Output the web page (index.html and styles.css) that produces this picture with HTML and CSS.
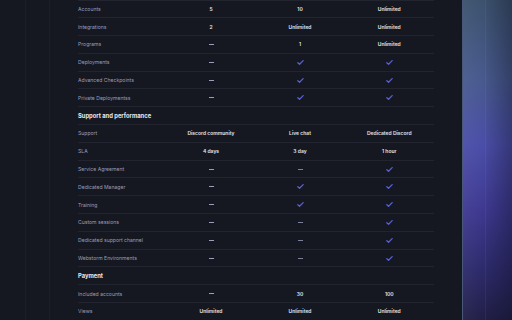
FILE: index.html
```html
<!DOCTYPE html>
<html>
<head>
<meta charset="utf-8">
<link rel="stylesheet" href="styles.css">
</head>
<body>
<div class="page">
  <div class="gutter"><div class="g1"></div><div class="g2"></div></div>
  <div class="table">
    <div class="row"><div class="label">Accounts</div><div class="val">5</div><div class="val">10</div><div class="val">Unlimited</div></div>
    <div class="row"><div class="label">Integrations</div><div class="val">2</div><div class="val">Unlimited</div><div class="val">Unlimited</div></div>
    <div class="row"><div class="label">Programs</div><div class="val"><span class="dash"></span></div><div class="val">1</div><div class="val">Unlimited</div></div>
    <div class="row"><div class="label">Deployments</div><div class="val"><span class="dash"></span></div><div class="val"><svg class="check" viewBox="0 0 8 6"><path d="M0.8 3.2L2.9 5.1L7.2 0.8"/></svg></div><div class="val"><svg class="check" viewBox="0 0 8 6"><path d="M0.8 3.2L2.9 5.1L7.2 0.8"/></svg></div></div>
    <div class="row"><div class="label">Advanced Checkpoints</div><div class="val"><span class="dash"></span></div><div class="val"><svg class="check" viewBox="0 0 8 6"><path d="M0.8 3.2L2.9 5.1L7.2 0.8"/></svg></div><div class="val"><svg class="check" viewBox="0 0 8 6"><path d="M0.8 3.2L2.9 5.1L7.2 0.8"/></svg></div></div>
    <div class="row"><div class="label">Private Deploymentss</div><div class="val"><span class="dash"></span></div><div class="val"><svg class="check" viewBox="0 0 8 6"><path d="M0.8 3.2L2.9 5.1L7.2 0.8"/></svg></div><div class="val"><svg class="check" viewBox="0 0 8 6"><path d="M0.8 3.2L2.9 5.1L7.2 0.8"/></svg></div></div>
    <div class="row section"><div class="heading">Support and performance</div></div>
    <div class="row"><div class="label">Support</div><div class="val">Discord community</div><div class="val">Live chat</div><div class="val">Dedicated Discord</div></div>
    <div class="row"><div class="label">SLA</div><div class="val">4 days</div><div class="val">3 day</div><div class="val">1 hour</div></div>
    <div class="row"><div class="label">Service Agreement</div><div class="val"><span class="dash"></span></div><div class="val"><span class="dash dim"></span></div><div class="val"><svg class="check" viewBox="0 0 8 6"><path d="M0.8 3.2L2.9 5.1L7.2 0.8"/></svg></div></div>
    <div class="row"><div class="label">Dedicated Manager</div><div class="val"><span class="dash"></span></div><div class="val"><svg class="check" viewBox="0 0 8 6"><path d="M0.8 3.2L2.9 5.1L7.2 0.8"/></svg></div><div class="val"><svg class="check" viewBox="0 0 8 6"><path d="M0.8 3.2L2.9 5.1L7.2 0.8"/></svg></div></div>
    <div class="row"><div class="label">Training</div><div class="val"><span class="dash"></span></div><div class="val"><svg class="check" viewBox="0 0 8 6"><path d="M0.8 3.2L2.9 5.1L7.2 0.8"/></svg></div><div class="val"><svg class="check" viewBox="0 0 8 6"><path d="M0.8 3.2L2.9 5.1L7.2 0.8"/></svg></div></div>
    <div class="row"><div class="label">Custom sessions</div><div class="val"><span class="dash"></span></div><div class="val"><span class="dash dim"></span></div><div class="val"><svg class="check" viewBox="0 0 8 6"><path d="M0.8 3.2L2.9 5.1L7.2 0.8"/></svg></div></div>
    <div class="row"><div class="label">Dedicated support channel</div><div class="val"><span class="dash"></span></div><div class="val"><span class="dash dim"></span></div><div class="val"><svg class="check" viewBox="0 0 8 6"><path d="M0.8 3.2L2.9 5.1L7.2 0.8"/></svg></div></div>
    <div class="row"><div class="label">Webstorm Environments</div><div class="val"><span class="dash"></span></div><div class="val"><span class="dash dim"></span></div><div class="val"><svg class="check" viewBox="0 0 8 6"><path d="M0.8 3.2L2.9 5.1L7.2 0.8"/></svg></div></div>
    <div class="row section"><div class="heading">Payment</div></div>
    <div class="row"><div class="label">Included accounts</div><div class="val"><span class="dash"></span></div><div class="val">30</div><div class="val">100</div></div>
    <div class="row"><div class="label">Views</div><div class="val">Unlimited</div><div class="val">Unlimited</div><div class="val">Unlimited</div></div>
  </div>
  <div class="spacer"></div>
  <div class="aside"><div class="aside-line"></div></div>
</div>
</body>
</html>
```
FILE: styles.css
```css
html, body {
  margin: 0;
  padding: 0;
  background: #151821;
}
body {
  font-family: Inter, "Liberation Sans", sans-serif;
  -webkit-font-smoothing: antialiased;
}
.page {
  display: flex;
  width: 512px;
  height: 320px;
  overflow: hidden;
  background: #151821;
}
.gutter {
  display: flex;
  width: 78px;
  flex-shrink: 0;
}
.g1 {
  width: 25px;
  border-right: 1px solid #1b1e28;
}
.g2 {
  width: 23px;
  border-right: 1px solid #1b1e28;
}
.table {
  width: 356px;
  flex-shrink: 0;
  margin-top: -0.5px;
  border-top: 1px solid #22252f;
}
.row {
  display: grid;
  grid-template-columns: 88.5px 89px 89px 89.5px;
  align-items: center;
  height: 17.8px;
  box-sizing: border-box;
  border-bottom: 1px solid #22252f;
}
.row.section {
  display: flex;
}
.label {
  font-size: 5.1px;
  color: #9b9db9;
  white-space: nowrap;
}
.heading {
  font-size: 5.8px;
  font-weight: 700;
  color: #e8e8ee;
  white-space: nowrap;
}
.val {
  display: flex;
  justify-content: center;
  align-items: center;
  font-size: 5px;
  font-weight: 600;
  color: #e4e4ea;
  white-space: nowrap;
}
.dash {
  display: block;
  width: 5px;
  height: 1px;
  background: #9a9fbb;
}
.dash.dim {
  background: #7a7f9c;
}
.check {
  width: 7px;
  height: 5px;
  fill: none;
  stroke: #5a61d4;
  stroke-width: 1.5;
  stroke-linecap: round;
  stroke-linejoin: round;
}
.spacer {
  flex: 1;
}
.aside {
  width: 49px;
  flex-shrink: 0;
  display: flex;
  border-left: 1px solid #4a5878;
  background:
    linear-gradient(90deg, rgba(255,255,255,0.04) 0%, rgba(0,0,0,0) 40%, rgba(10,12,30,0.35) 100%),
    linear-gradient(180deg, #3c526d 0%, #485a8e 25%, #4b4ea8 45%, #3f3a92 65%, #2d2a6a 85%, #211f46 100%);
}
.aside-line {
  width: 22px;
  border-right: 1px solid rgba(255,255,255,0.05);
}
```
